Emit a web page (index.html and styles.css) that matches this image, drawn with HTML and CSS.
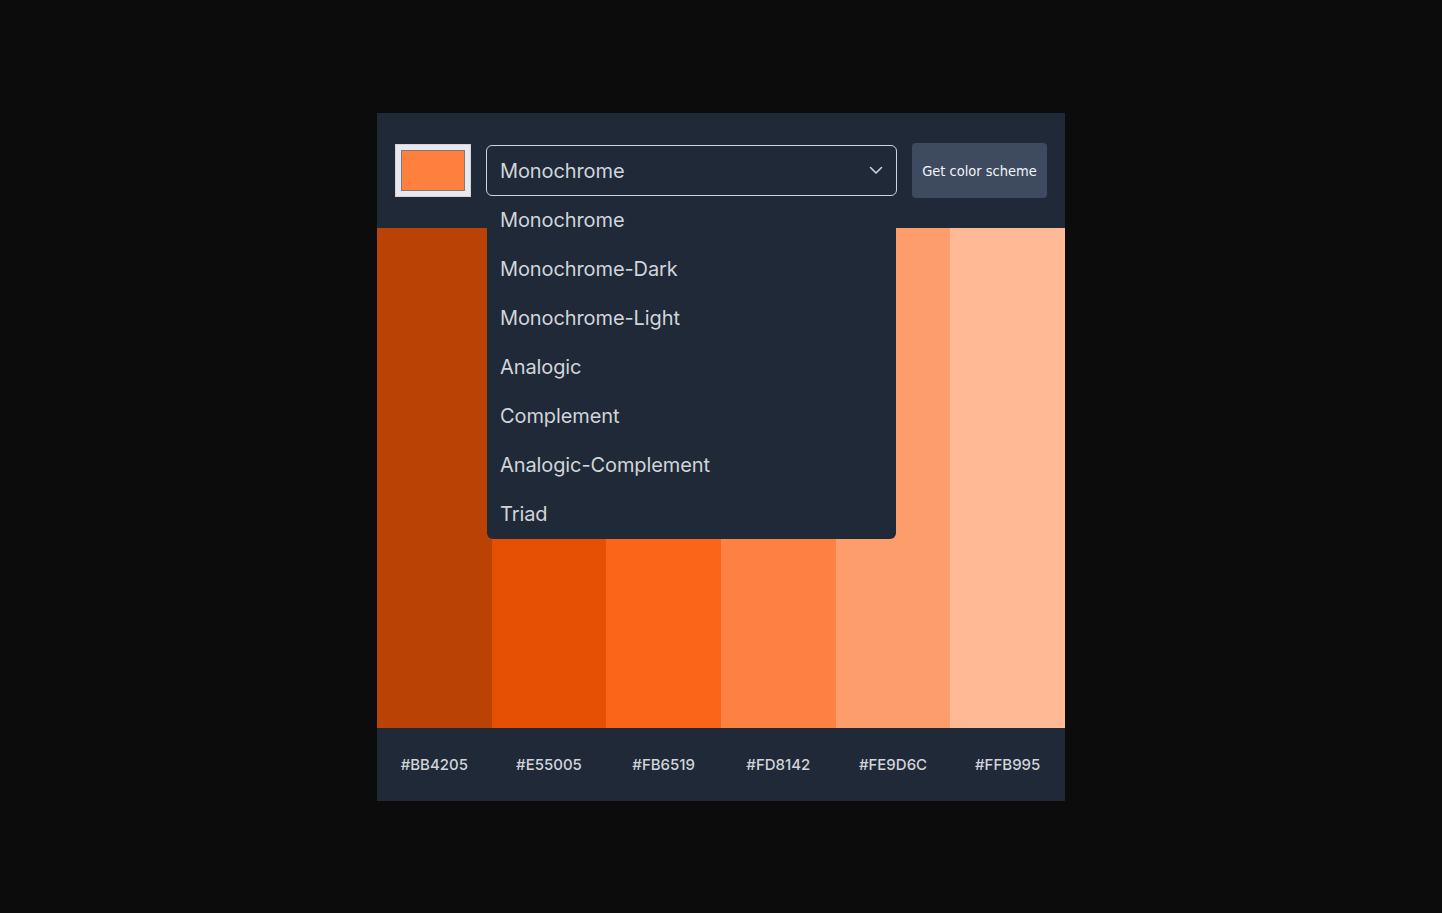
FILE: index.html
```html
<!DOCTYPE html>
<html lang="en">
<head>
<meta charset="utf-8">
<title>Color Scheme</title>
<link rel="stylesheet" href="styles.css">
</head>
<body>
<main class="card">
  <header class="controls">
    <div class="color-input"><span class="color-swatch"></span></div>
    <div class="select-wrap">
      <div class="select">
        <span class="select-value">Monochrome</span>
        <svg class="chevron" width="14" height="9" viewBox="0 0 14 9"><path d="M1.5 1.5 L7 7 L12.5 1.5" fill="none" stroke="#d1d5db" stroke-width="1.6" stroke-linecap="round" stroke-linejoin="round"/></svg>
      </div>
      <ul class="menu">
        <li>Monochrome</li>
        <li>Monochrome-Dark</li>
        <li>Monochrome-Light</li>
        <li>Analogic</li>
        <li>Complement</li>
        <li>Analogic-Complement</li>
        <li>Triad</li>
      </ul>
    </div>
    <button class="btn">Get color scheme</button>
  </header>
  <section class="swatches">
    <div class="swatch" style="background:#BB4205"></div>
    <div class="swatch" style="background:#E55005"></div>
    <div class="swatch" style="background:#FB6519"></div>
    <div class="swatch" style="background:#FD8142"></div>
    <div class="swatch" style="background:#FE9D6C"></div>
    <div class="swatch" style="background:#FFB995"></div>
  </section>
  <footer class="codes">
    <span>#BB4205</span>
    <span>#E55005</span>
    <span>#FB6519</span>
    <span>#FD8142</span>
    <span>#FE9D6C</span>
    <span>#FFB995</span>
  </footer>
</main>
</body>
</html>
```

FILE: styles.css
```css
* { box-sizing: border-box; }
html, body { margin: 0; padding: 0; }
body {
  background: #0c0c0c;
  height: 913px;
  display: flex;
  align-items: center;
  justify-content: center;
  font-family: Inter, "Liberation Sans", sans-serif;
}
.card {
  width: 688px;
  height: 688px;
  background: #1f2937;
  display: flex;
  flex-direction: column;
}
.controls {
  height: 115px;
  flex: none;
  display: flex;
  align-items: center;
  gap: 15px;
  padding: 0 18px;
}
.color-input {
  width: 76px;
  height: 53px;
  flex: none;
  background: #e9e8ed;
  border: 1px solid #d4d3d9;
  padding: 5px;
}
.color-swatch {
  display: block;
  width: 100%;
  height: 100%;
  background: #fe7f3e;
  border: 1px solid #777b82;
}
.select-wrap {
  position: relative;
  width: 411px;
  flex: none;
}
.select {
  height: 51px;
  border: 1px solid #d1d5db;
  border-radius: 6px;
  display: flex;
  align-items: center;
  justify-content: space-between;
  padding: 2px 13px 0 13px;
  color: #d1d5db;
  font-size: 20px;
  letter-spacing: -0.1px;
}
.chevron { display: block; margin-top: -1px; }
.menu {
  position: absolute;
  top: 51px;
  left: 1px;
  width: 409px;
  margin: 0;
  padding: 0;
  list-style: none;
  background: #1f2937;
  border-radius: 0 0 6px 6px;
  z-index: 2;
}
.menu li {
  height: 49px;
  display: flex;
  align-items: center;
  padding-left: 13px;
  color: #d1d5db;
  font-size: 20px;
  letter-spacing: -0.1px;
}
.btn {
  width: 135px;
  height: 55px;
  flex: none;
  border: none;
  border-radius: 4px;
  background: #3d4a5f;
  color: #f3f4f6;
  font-family: "DejaVu Sans Condensed", "DejaVu Sans", sans-serif;
  font-stretch: condensed;
  font-size: 14.5px;
  padding: 2px 0 0 0;
}
.swatches {
  height: 500px;
  flex: none;
  display: grid;
  grid-template-columns: repeat(6, 1fr);
}
.codes {
  flex: 1;
  display: grid;
  grid-template-columns: repeat(6, 1fr);
  align-items: center;
  justify-items: center;
  color: #d1d5db;
  font-size: 15px;
  font-weight: 500;
  padding-top: 1px;
}
```
